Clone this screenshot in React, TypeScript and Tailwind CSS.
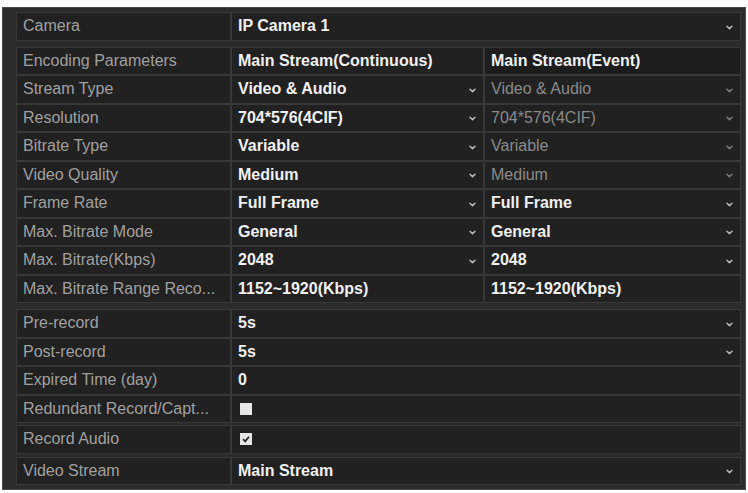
import React from "react";

const FONT = { fontFamily: '"Liberation Sans", Arial, sans-serif' };

function Chevron({ dim }: { dim?: boolean }) {
  return (
    <svg width="7" height="5" viewBox="0 0 7 5" className="shrink-0 mt-[2px]">
      <path
        d="M1 1.2 L3.5 3.6 L6 1.2"
        stroke={dim ? "#7c7c7c" : "#b8b8b8"}
        strokeWidth="1.5"
        fill="none"
        strokeLinecap="round"
        strokeLinejoin="round"
      />
    </svg>
  );
}

function Label({ text }: { text: string }) {
  return (
    <div className="w-[213px] shrink-0 bg-[#212121] flex items-center pl-[6px] text-[16px] text-[#a0a0a0] whitespace-nowrap overflow-hidden">
      {text}
    </div>
  );
}

function Value({
  text,
  chevron,
  dim,
  grow,
  width,
  dark,
}: {
  text: React.ReactNode;
  chevron?: boolean;
  dim?: boolean;
  grow?: boolean;
  width?: string;
  dark?: boolean;
}) {
  return (
    <div
      className={
        (grow ? "flex-1 " : "shrink-0 ") +
        (width ?? "") +
        (dark ? " bg-[#1c1c1c]" : " bg-[#212121]") +
        " flex items-center justify-between pl-[6px] pr-[7px] text-[16px] whitespace-nowrap " +
        (dim ? "text-[#8a8a8a] font-normal" : "text-[#f0f0f0] font-bold")
      }
    >
      <span>{text}</span>
      {chevron ? <Chevron dim={dim} /> : null}
    </div>
  );
}

function Row({ children }: { children: React.ReactNode }) {
  return <div className="flex h-[26.5px] gap-[2px]">{children}</div>;
}

function Section({ children, className }: { children: React.ReactNode; className?: string }) {
  return (
    <div className={"flex flex-col gap-[2px] bg-[#383838] p-[1px] " + (className ?? "")}>
      {children}
    </div>
  );
}

function Checkbox({ checked }: { checked?: boolean }) {
  return (
    <div className="w-[12px] h-[12px] bg-[#e6e6e6] flex items-center justify-center ml-[2px]">
      {checked ? (
        <svg width="10" height="10" viewBox="0 0 10 10">
          <path d="M2 5.2 L4.2 7.4 L8 2.8" stroke="#2a2a2a" strokeWidth="1.8" fill="none" />
        </svg>
      ) : null}
    </div>
  );
}

const dual: [string, string, string, boolean][] = [
  ["Stream Type", "Video & Audio", "Video & Audio", true],
  ["Resolution", "704*576(4CIF)", "704*576(4CIF)", true],
  ["Bitrate Type", "Variable", "Variable", true],
  ["Video Quality", "Medium", "Medium", true],
  ["Frame Rate", "Full Frame", "Full Frame", false],
  ["Max. Bitrate Mode", "General", "General", false],
  ["Max. Bitrate(Kbps)", "2048", "2048", false],
];

export default function App() {
  return (
    <div className="w-[748px] h-[493px] bg-white pt-[7px] pl-[2px]" style={FONT}>
      <div className="w-[744px] h-[483px] bg-[#2b2b2b] border border-[#4a4a4a] pl-[13px] pr-[5px] pt-[4px] flex flex-col">
        <Section className="w-[725px]">
          <Row>
            <Label text="Camera" />
            <Value text="IP Camera 1" chevron grow />
          </Row>
        </Section>

        <Section className="w-[725px] mt-[6px]">
          <Row>
            <Label text="Encoding Parameters" />
            <Value text="Main Stream(Continuous)" width="w-[251px]" />
            <Value text="Main Stream(Event)" grow dark />
          </Row>
          {dual.map(([l, a, b, d]) => (
            <Row key={l}>
              <Label text={l} />
              <Value text={a} chevron width="w-[251px]" />
              <Value text={b} chevron dim={d} grow />
            </Row>
          ))}
          <Row>
            <Label text="Max. Bitrate Range Reco..." />
            <Value text="1152~1920(Kbps)" width="w-[251px]" />
            <Value text="1152~1920(Kbps)" grow />
          </Row>
        </Section>

        <Section className="w-[725px] mt-[6px]">
          <Row>
            <Label text="Pre-record" />
            <Value text="5s" chevron grow />
          </Row>
          <Row>
            <Label text="Post-record" />
            <Value text="5s" chevron grow />
          </Row>
          <Row>
            <Label text="Expired Time (day)" />
            <Value text="0" grow />
          </Row>
          <Row>
            <Label text="Redundant Record/Capt..." />
            <Value text={<Checkbox />} grow />
          </Row>
        </Section>

        <Section className="w-[725px] mt-[2px]">
          <Row>
            <Label text="Record Audio" />
            <Value text={<Checkbox checked />} grow />
          </Row>
        </Section>

        <Section className="w-[725px] mt-[3px]">
          <Row>
            <Label text="Video Stream" />
            <Value text="Main Stream" chevron grow />
          </Row>
        </Section>
      </div>
    </div>
  );
}
